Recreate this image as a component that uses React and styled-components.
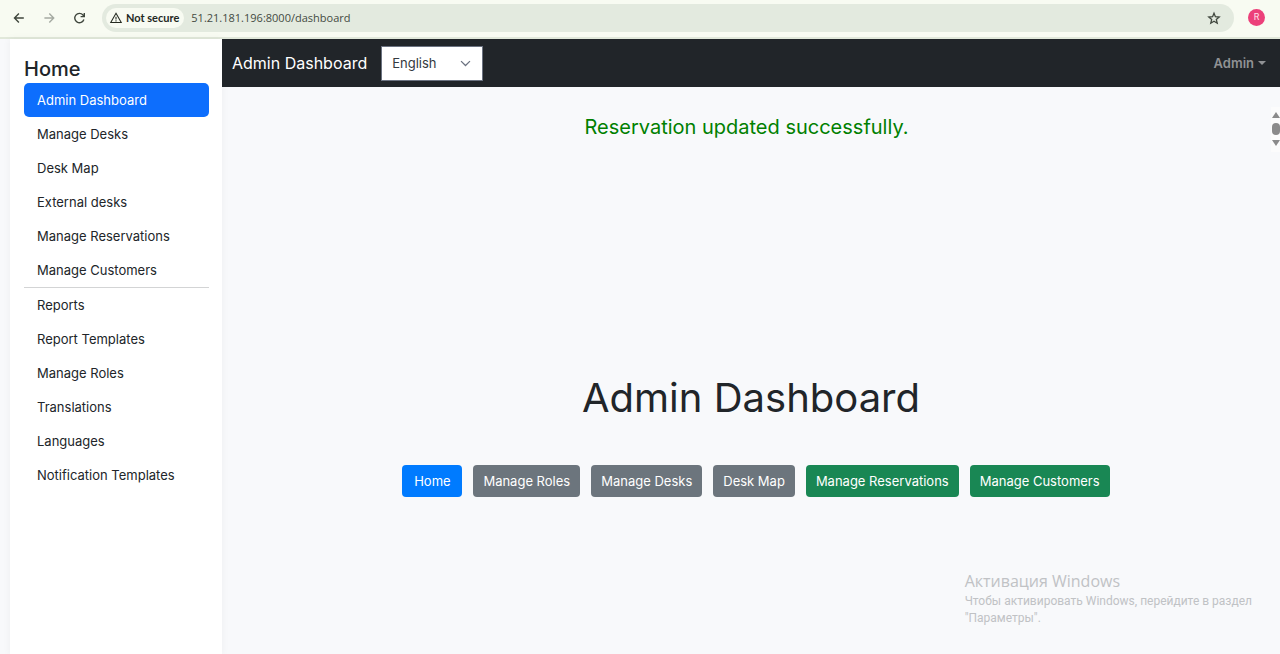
import React from "react";
import styled, { createGlobalStyle, css } from "styled-components";

const GlobalStyle = createGlobalStyle`
  *, *::before, *::after { box-sizing: border-box; }
  body {
    margin: 0;
    background: #f8f9fb;
    color: #212529;
    font-family: Inter, "Liberation Sans", sans-serif;
    font-size: 13px;
  }
  h1, h2, p, ul { margin: 0; padding: 0; }
  button, select, input { font: inherit; color: inherit; }
`;

const Page = styled.div`
  display: flex;
  flex-direction: column;
  min-height: 100vh;
  position: relative;
  overflow: hidden;
`;

const BrowserBar = styled.header`
  display: flex;
  align-items: center;
  height: 39px;
  padding: 0 15px 2px 10px;
  background: #f8fbf2;
  border-bottom: 2px solid #e1e8da;
`;

const BrowserButton = styled.button`
  display: flex;
  align-items: center;
  justify-content: center;
  width: 18px;
  height: 18px;
  margin-right: 12px;
  padding: 0;
  border: 0;
  background: none;
  color: ${(p) => (p.$faded ? "#a5aaa2" : "#3f463d")};
`;

const AddressBar = styled.div`
  flex: 1;
  display: flex;
  align-items: center;
  height: 28px;
  margin-left: 2px;
  padding: 0 12px 0 4px;
  border-radius: 14px;
  background: #e3eadf;
`;

const SecurityChip = styled.button`
  display: flex;
  align-items: center;
  gap: 3px;
  height: 20px;
  padding: 0 5px 0 3px;
  border: 0;
  border-radius: 10px;
  background: #f8fbf2;
  color: #24291f;
  font-family: Lato, sans-serif;
  font-size: 11px;
  font-weight: 700;
  white-space: nowrap;
`;

const AddressInput = styled.input`
  flex: 1;
  min-width: 0;
  height: 24px;
  padding: 0 7px;
  border: 0;
  outline: 0;
  background: none;
  color: #444b42;
  font-family: "Open Sans", sans-serif;
  font-size: 11px;
`;

const StarButton = styled(BrowserButton)`
  width: 16px;
  margin: 0;
`;

const Profile = styled.button`
  width: 17px;
  height: 17px;
  margin-left: 14px;
  padding: 0;
  border: 0;
  border-radius: 50%;
  background: #ec407a;
  color: #ffe3ec;
  font-family: Roboto, sans-serif;
  font-size: 9px;
  line-height: 17px;
`;

const Shell = styled.div`
  flex: 1;
  display: flex;
  padding-left: 10px;
`;

const Sidebar = styled.nav`
  flex: 0 0 212px;
  padding: 16px 13px 0 14px;
  background: #fff;
  box-shadow: 0 0 8px rgba(0, 0, 0, 0.05);
`;

const SidebarTitle = styled.h2`
  font-size: 20px;
  font-weight: 500;
  line-height: 28px;
`;

const NavList = styled.ul`
  list-style: none;
  & + & {
    border-top: 1px solid #d3d4d5;
  }
`;

const NavLink = styled.a`
  display: block;
  padding: 0 13px;
  border-radius: 5px;
  color: #212529;
  line-height: 34px;
  text-decoration: none;
  ${(p) =>
    p.$active &&
    css`
      background: #0d6efd;
      color: #fff;
    `}
`;

const Main = styled.div`
  flex: 1;
  min-width: 0;
  display: flex;
  flex-direction: column;
`;

const TopBar = styled.div`
  display: flex;
  align-items: center;
  height: 48px;
  padding: 0 14px 0 10px;
  background: #212529;
`;

const Brand = styled.a`
  margin-right: 14px;
  color: #fff;
  font-size: 16px;
  text-decoration: none;
`;

const SelectWrap = styled.div`
  display: flex;
  align-items: center;
  width: 102px;
  position: relative;
  svg {
    position: absolute;
    right: 12px;
    pointer-events: none;
  }
`;

const LanguageSelect = styled.select`
  appearance: none;
  width: 100%;
  height: 35px;
  padding: 0 10px;
  border: 1px solid #6b7280;
  border-radius: 0;
  background: #fff;
  color: #343a40;
`;

const AccountButton = styled.button`
  display: flex;
  align-items: center;
  gap: 4px;
  margin-left: auto;
  padding: 0;
  border: 0;
  background: none;
  color: #909294;
  font-weight: 600;
`;

const Caret = styled.span`
  border: 4px solid transparent;
  border-top-color: currentColor;
  border-bottom: 0;
`;

const StatusRow = styled.div`
  display: flex;
  align-items: flex-start;
  padding-top: 20px;
`;

const StatusMessage = styled.p`
  flex: 1;
  padding-top: 4px;
  color: #008000;
  font-size: 20px;
  line-height: 32px;
  text-align: center;
`;

const Scroller = styled.div`
  display: flex;
  flex-direction: column;
  align-items: center;
  gap: 5px;
  width: 9px;
  height: 45px;
  padding-top: 5px;
  overflow: hidden;
  background: #fcfcfc;
  color: #8b8b8b;
`;

const ScrollArrow = styled.span`
  border: 4px solid transparent;
  ${(p) =>
    p.$up
      ? "border-bottom-color: currentColor; border-top: 0; border-bottom-width: 6px;"
      : "border-top-color: currentColor; border-bottom: 0; border-top-width: 6px;"}
`;

const ScrollThumb = styled.span`
  width: 8px;
  height: 12px;
  border-radius: 4px;
  background: currentColor;
`;

const Dashboard = styled.main`
  padding-top: 216px;
`;

const Title = styled.h1`
  font-size: 40px;
  font-weight: 400;
  line-height: 60px;
  text-align: center;
`;

const Actions = styled.div`
  display: flex;
  justify-content: center;
  gap: 11px;
  padding: 37px 0 24px 10px;
`;

const tones = { primary: "#007bff", secondary: "#6c757d", success: "#198754" };

const Action = styled.button`
  min-width: 60px;
  height: 32px;
  padding: 0 10px;
  border: 0;
  border-radius: 4px;
  background: ${(p) => tones[p.$tone]};
  color: #fff;
  white-space: nowrap;
`;

const Watermark = styled.aside`
  position: absolute;
  right: 28px;
  bottom: 27px;
  color: #c0c2c5;
  font-family: Roboto, sans-serif;
  font-size: 12px;
  line-height: 17px;
  pointer-events: none;
`;

const WatermarkTitle = styled.p`
  font-family: "Open Sans", sans-serif;
  font-size: 16px;
  line-height: 24px;
`;

const primaryLinks = [
  "Admin Dashboard",
  "Manage Desks",
  "Desk Map",
  "External desks",
  "Manage Reservations",
  "Manage Customers",
];

const secondaryLinks = [
  "Reports",
  "Report Templates",
  "Manage Roles",
  "Translations",
  "Languages",
  "Notification Templates",
];

const actions = [
  ["Home", "primary"],
  ["Manage Roles", "secondary"],
  ["Manage Desks", "secondary"],
  ["Desk Map", "secondary"],
  ["Manage Reservations", "success"],
  ["Manage Customers", "success"],
];

const Icon = ({ size = 16, width = 1.5, children }) => (
  <svg
    width={size}
    height={size}
    viewBox="0 0 16 16"
    fill="none"
    stroke="currentColor"
    strokeWidth={width}
    aria-hidden="true"
  >
    {children}
  </svg>
);

const NavItems = ({ items, active }) => (
  <NavList>
    {items.map((label) => (
      <li key={label}>
        <NavLink href="#" $active={label === active}>
          {label}
        </NavLink>
      </li>
    ))}
  </NavList>
);

export default function App() {
  return (
    <Page>
      <GlobalStyle />
      <BrowserBar>
        <BrowserButton aria-label="Back">
          <Icon width={1.4}>
            <path d="M12.8 8H3.5M7.9 3.6 3.5 8l4.4 4.4" />
          </Icon>
        </BrowserButton>
        <BrowserButton aria-label="Forward" $faded>
          <Icon width={1.4}>
            <path d="M3.4 8h9.3M8.3 3.6 12.7 8l-4.4 4.4" />
          </Icon>
        </BrowserButton>
        <BrowserButton aria-label="Reload">
          <Icon width={1.4}>
            <path d="M12.9 9.6A4.7 4.7 0 1 1 12 5L13.1 6.2M13.3 2.9v3.7H9.6" />
          </Icon>
        </BrowserButton>
        <AddressBar>
          <SecurityChip>
            <Icon size={14} width={1.2}>
              <path d="M8 2.6 14 13.2H2ZM8 6.6v3.2M8 10.6v1.4" />
            </Icon>
            Not secure
          </SecurityChip>
          <AddressInput aria-label="Address" defaultValue="51.21.181.196:8000/dashboard" />
          <StarButton aria-label="Bookmark this page">
            <Icon width={1.3}>
              <path d="M8 3.2 9.4 6.7l3.8.3-2.9 2.5.9 3.7L8 11.2l-3.2 2 .9-3.7L2.8 7l3.8-.3Z" />
            </Icon>
          </StarButton>
        </AddressBar>
        <Profile aria-label="Profile">R</Profile>
      </BrowserBar>
      <Shell>
        <Sidebar>
          <SidebarTitle>Home</SidebarTitle>
          <NavItems items={primaryLinks} active="Admin Dashboard" />
          <NavItems items={secondaryLinks} />
        </Sidebar>
        <Main>
          <TopBar>
            <Brand href="#">Admin Dashboard</Brand>
            <SelectWrap>
              <LanguageSelect aria-label="Language" defaultValue="English">
                <option>English</option>
              </LanguageSelect>
              <Icon size={11} width={1.8}>
                <path d="m1.5 4.5 6.5 6.5 6.5-6.5" stroke="#6b7280" />
              </Icon>
            </SelectWrap>
            <AccountButton>
              Admin
              <Caret />
            </AccountButton>
          </TopBar>
          <StatusRow>
            <StatusMessage role="status">Reservation updated successfully.</StatusMessage>
            <Scroller aria-hidden="true">
              <ScrollArrow $up />
              <ScrollThumb />
              <ScrollArrow />
            </Scroller>
          </StatusRow>
          <Dashboard>
            <Title>Admin Dashboard</Title>
            <Actions>
              {actions.map(([label, tone]) => (
                <Action key={label} $tone={tone}>
                  {label}
                </Action>
              ))}
            </Actions>
          </Dashboard>
        </Main>
      </Shell>
      <Watermark>
        <WatermarkTitle>Активация Windows</WatermarkTitle>
        <p>
          Чтобы активировать Windows, перейдите в раздел
          <br />
          "Параметры".
        </p>
      </Watermark>
    </Page>
  );
}
